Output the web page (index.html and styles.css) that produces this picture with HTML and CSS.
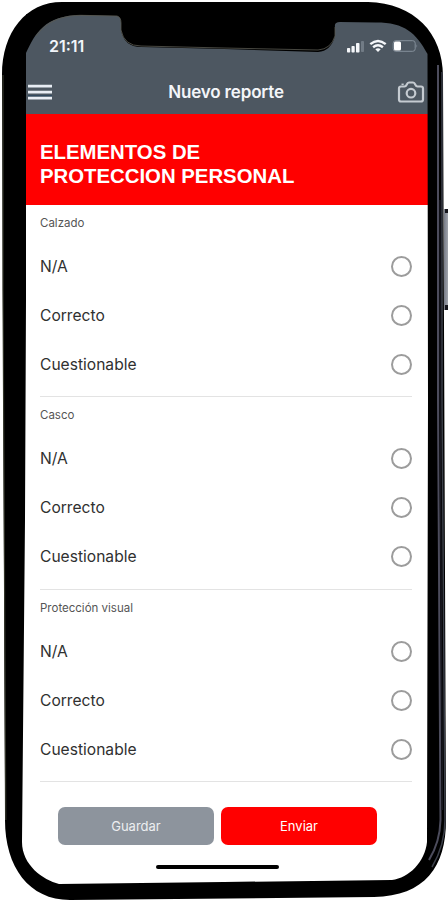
FILE: index.html
```html
<!DOCTYPE html>
<html lang="es">
<head>
<meta charset="utf-8">
<title>Nuevo reporte</title>
<link rel="stylesheet" href="styles.css">
</head>
<body>
<div class="phone">
  <main class="screen">
    <header class="top">
      <div class="status">
        <span class="time">21:11</span>
        <svg class="status-icons" width="74" height="16" viewBox="0 0 74 16">
          <g fill="#f5f7fa"><rect x="3" y="10" width="3.200" height="4.500" rx=".8"/><rect x="7.500" y="8" width="3.200" height="6.500" rx=".8"/><rect x="12" y="5" width="3.500" height="9.500" rx=".8"/></g>
          <rect x="17" y="3" width="3" height="11" rx=".8" fill="#717b85"/>
          <g fill="none" stroke="#f5f7fa" stroke-width="2.400"><path d="M26.300 6.200Q34 -.3 41.700 6.200"/><path d="M29.100 9.200Q34 5.200 38.900 9.200"/></g>
          <path d="M31.300 11.200Q34 9.100 36.700 11.200L34 14Z" fill="#f5f7fa"/>
          <rect x="49.200" y="2.700" width="22" height="10.600" rx="2.500" fill="none" stroke="#85909b"/>
          <path d="M72.500 6.200Q74 8 72.500 9.800Z" fill="#85909b"/>
          <rect x="50" y="3.500" width="7" height="9" rx="1.500" fill="#fff"/>
        </svg>
      </div>
      <nav class="nav">
        <svg width="24" height="18" viewBox="0 0 24 18"><path d="M0 12.800h24" stroke="#2b4660" stroke-width="1.200"/><path d="M0 3.200h24M0 9.200h24M0 15.200h24" stroke="#e8edf4" stroke-width="2.800"/></svg>
        <h1>Nuevo reporte</h1>
        <svg width="28" height="24" viewBox="0 0 28 24" fill="none" stroke="#c5cbd1" stroke-width="2.200" stroke-linejoin="round"><path d="M4 6.500H7.500Q8.800 6.500 9.800 4.500Q10.600 2.500 12 2.500H16Q17.400 2.500 18.200 4.500Q19.200 6.500 20.500 6.500H24Q26 6.500 26 8.500V19.500Q26 21.500 24 21.500H4Q2 21.500 2 19.500V8.500Q2 6.500 4 6.500Z"/><circle cx="14" cy="13.200" r="4.300"/><path d="M4.500 4.300H6.700" stroke-width="1.500"/></svg>
      </nav>
    </header>
    <h2 class="banner">ELEMENTOS DE<br>PROTECCION PERSONAL</h2>
    <form class="form">
      <section class="group">
        <h3>Calzado</h3>
        <div class="option">N/A<i class="radio"></i></div>
        <div class="option">Correcto<i class="radio"></i></div>
        <div class="option">Cuestionable<i class="radio"></i></div>
      </section>
      <section class="group">
        <h3>Casco</h3>
        <div class="option">N/A<i class="radio"></i></div>
        <div class="option">Correcto<i class="radio"></i></div>
        <div class="option">Cuestionable<i class="radio"></i></div>
      </section>
      <section class="group">
        <h3>Protección visual</h3>
        <div class="option">N/A<i class="radio"></i></div>
        <div class="option">Correcto<i class="radio"></i></div>
        <div class="option">Cuestionable<i class="radio"></i></div>
      </section>
      <div class="actions">
        <button type="button" class="save">Guardar</button>
        <button type="button" class="send">Enviar</button>
      </div>
    </form>
    <div class="home"></div>
  </main>
  <svg class="frame" width="448" height="900" viewBox="0 0 448 900">
    <defs>
      <linearGradient id="key"><stop offset="0" stop-color="#777b87"/><stop offset="1" stop-color="#a0a4ac"/></linearGradient>
    </defs>
    <rect x="444" y="209" width="4" height="101" fill="url(#key)"/>
    <path d="M445 209h3v4h-3zM445 305h3v5h-3z" fill="#15151b"/>
    <path fill="#000" fill-rule="evenodd" d="M62 2H368C414 3 443 33 443 76L446 820C446 867 425 896 374 897L70 900C29 900 5 867 5 820L2 75C2 32 26 2 62 2ZM26 53C35 34 44 15 82 15L117 16Q121 17 121 23V30Q124 47 141 47L224 49L318 52Q331 51 335 36V27Q334 22 340 22L376 22.500C405 22.500 416 33 427.500 54L428 400L427 842C425 862 409 878 392 880L224 882L59 884C43 880 22 865 22 842L25 520L26 300Z"/>
    <path d="M3 75V290L5.800 820" fill="none" stroke="#34362b" stroke-width="1.200"/>
    <path d="M36 36C45 24 57 16 80 15.300L117 16Q121 17 121 23V30Q124 46 141 46L224 48L318 50Q331 49 335 36V27" fill="none" stroke="#595950" stroke-width=".8"/>
    <path d="M438 65V400L440.500 820Q440 842 429 860" fill="none" stroke="#4c4c5c" stroke-width="2"/>
    <path d="M442 72V400L445 820Q445 845 432 867" fill="none" stroke="#3b3f49" stroke-width="1.500"/>
    <path d="M440 200V400L442.500 810" fill="none" stroke="#16161f" stroke-width="1.500"/>
  </svg>
</div>
</body>
</html>
```
FILE: styles.css
```css
* { box-sizing: border-box; }
body { margin: 0; background: #fff; font-family: Inter, "Liberation Sans", sans-serif; }
h1, h2, h3 { margin: 0; }
svg { display: block; flex: none; }
.phone { position: relative; width: 448px; height: 900px; padding: 14px 20px 0 26px; overflow: hidden; }
.screen { display: flex; flex-direction: column; height: 870px; }
.frame { position: absolute; left: 0; top: 0; }
.top { height: 99.500px; flex: none; background: #4d5761; border-radius: 0 40px 0 0; }
.status { display: flex; justify-content: space-between; align-items: center; height: 64px; padding: 0 10px 0 23px; }
.time { font-size: 16px; font-weight: 600; color: #f1f5fa; }
.nav { display: flex; justify-content: space-between; align-items: center; height: 28px; padding: 0 3px 0 2px; }
.nav h1 { margin-left: 3px; font-size: 17px; font-weight: 600; line-height: 28px; color: #f3f5f9; letter-spacing: -.15px; }
.banner { height: 91.500px; flex: none; padding: 26px 14px 0; background: #f00; color: #fff; font: bold 20.350px/24px "Liberation Sans", Arial, sans-serif; }
.form { flex: none; padding: 0 16px 0 14px; }
.group { height: 192.300px; border-bottom: 1.500px solid #e3e3e3; padding-top: 10px; }
.group h3 { height: 27px; font-size: 11.500px; font-weight: 400; line-height: 17px; color: #555; }
.option { display: flex; align-items: center; justify-content: space-between; height: 49px; font-size: 15.600px; color: #303030; }
.radio { width: 21px; height: 21px; border: 2px solid #9c9c9c; border-radius: 50%; }
.actions { display: flex; gap: 7px; padding: 25px 0 0 18px; }
.actions button { width: 156px; height: 38px; padding: 0; border: 0; border-radius: 7px; font: 400 13px Inter, sans-serif; color: #fff; }
.actions .save { background: #8d949d; color: #eceef0; }
.actions .send { background: #f00; }
.home { width: 123px; height: 4px; margin: 20px 0 0 130px; border-radius: 2px; background: #000; }
```
